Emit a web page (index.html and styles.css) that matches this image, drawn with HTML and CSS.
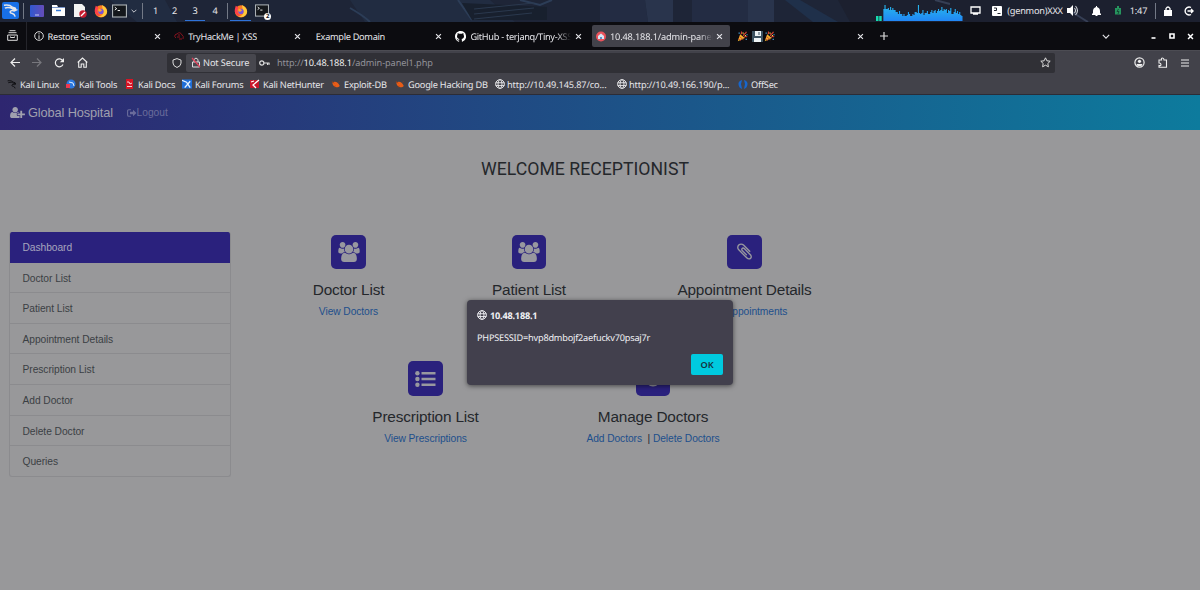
FILE: index.html
```html
<!DOCTYPE html>
<html lang="en">
<head>
  <meta charset="UTF-8" />
  <meta name="viewport" content="width=device-width, initial-scale=1.0"/>
  <title>Global Hospital - Receptionist</title>
  <link rel="stylesheet" href="styles.css">
</head>
<body>
  <svg class="sprite" width="0" height="0">
    <symbol id="dragon" viewBox="0 0 16 16"><path d="M1 3c4-1 7 0 9 2M2 6c4-2 7 0 9 1l3 1-2 1c-3-1-5 0-4 2 1 1 4 0 5 4M10 5l3 1 1 2" fill="none" stroke="currentColor" stroke-width="1.6"/></symbol>
    <symbol id="firefox" viewBox="0 0 16 16"><circle cx="8" cy="8.5" r="7" fill="#ff7a22"/><path d="M9 1c4 2 6 5 6 8-1 5-6 7-10 5 5 0 7-4 5-8z" fill="#ffcb3a"/><path d="M1 6l1-4 3 2C3 8 4 12 8 13c-4 2-8-3-7-7z" fill="#ff3d4d"/><circle cx="8" cy="8.5" r="3" fill="#7954d8"/><path d="M5 6c3-1 4 1 4 2-2 0-2 2-4 0z" fill="#ffa530"/></symbol>
    <symbol id="terminal" viewBox="0 0 16 14"><rect x=".6" y=".6" width="14.8" height="12.8" fill="#14171b" stroke="#aab0b4" stroke-width="1.2"/><path d="M3 3l2 1.5L3 6M6 6.5h2.5" fill="none" stroke="#fff"/></symbol>
    <symbol id="globe" viewBox="0 0 16 16"><g fill="none" stroke="currentColor" stroke-width="1.5"><circle cx="8" cy="8" r="7"/><ellipse cx="8" cy="8" rx="3.2" ry="7"/><path d="M1 6h14M1 10.5h14"/></g></symbol>
    <symbol id="close" viewBox="0 0 8 8"><path d="M1.2 1.2l5.6 5.6M6.8 1.2L1.2 6.8" stroke="currentColor" stroke-width="1.3"/></symbol>
    <symbol id="chevron" viewBox="0 0 10 6"><path d="M1 1l4 4 4-4" fill="none" stroke="currentColor" stroke-width="1.4"/></symbol>
    <symbol id="popper" viewBox="0 0 14 14"><path d="M1 13l3-9 6 5z" fill="#f5b52d"/><path d="M3 7l5 4M2 10l3 2" stroke="#d24a32" stroke-width="1.2"/><path d="M5 4c1-1 2-2 0-3M8 6c1-3 3-2 4-5M9 8c2-2 3 0 4-1" fill="none" stroke="#e9483b" stroke-width="1.3"/><path d="M2 2h1.5v1.5H2zM12 4h1.5v1.5H12zM11 10h1.5v1.5H11z" fill="#48a8e8"/><path d="M7 2h1.5v1.5H7zM10 5h1.5v1.5H10z" fill="#ffda45"/></symbol>
    <symbol id="exploit" viewBox="0 0 12 12"><path d="M1.500 4.500c3-3 8 0 9 4-2 2.500-6 1.500-8-1z" fill="#e85d18"/><path d="M1 3l3 2M5 8l-1 2M9 4l1-1" stroke="#a43e12"/></symbol>
    <symbol id="users" viewBox="0 0 1920 1792"><path fill="currentColor" d="M593 896q-162 5-265 128h-134q-82 0-138-40.5t-56-118.5q0-353 124-353 6 0 43.5 21t97.5 42.5 119 21.5q67 0 133-23-5 37-5 66 0 139 81 256zm1071 637q0 120-73 189.5t-194 69.5h-874q-121 0-194-69.5t-73-189.5q0-53 3.5-103.5t14-109 26.5-108.5 43-97.5 62-81 85.5-53.5 111.5-20q10 0 43 21.5t73 48 107 48 135 21.5 135-21.5 107-48 73-48 43-21.5q61 0 111.5 20t85.5 53.5 62 81 43 97.5 26.5 108.5 14 109 3.5 103.5zm-1024-1277q0 106-75 181t-181 75-181-75-75-181 75-181 181-75 181 75 75 181zm704 384q0 159-112.5 271.5t-271.5 112.5-271.5-112.5-112.5-271.5 112.5-271.5 271.5-112.5 271.5 112.5 112.5 271.5zm576 225q0 78-56 118.5t-138 40.5h-134q-103-123-265-128 81-117 81-256 0-29-5-66 66 23 133 23 59 0 119-21.5t97.5-42.5 43.5-21q124 0 124 353zm-128-609q0 106-75 181t-181 75-181-75-75-181 75-181 181-75 181 75 75 181z"/></symbol>
  </svg>

  <header class="panel">
    <svg class="wallpaper" viewBox="0 0 1200 22" preserveAspectRatio="none">
      <rect width="1200" height="22" fill="#1e2537"/>
      <path d="M110 0h55l12 22h-40zM350 0h140l25 22H365z" fill="#212c41"/>
      <path d="M350 8q14 8 20 14M458 0l14 20M520 0l20 5 12-5" stroke="#2c3d57" stroke-width="2" fill="none"/>
      <path d="M462 3l85 4v13h-75z" fill="#18202e"/>
      <path d="M474 9l60-6M474 14l60-6M474 19l58-6" stroke="#2b394e"/>
      <path d="M600 0h45l3 22h-48zM692 0h57v22h-57z" fill="#232c43"/>
      <path d="M645 0h28v22h-25zM748 0h26v22h-26z" fill="#29344c"/>
      <path d="M785 0h15l38 22h-25z" fill="#1f304a"/>
      <path d="M838 0h362v22H850z" fill="#1c202f"/>
      <path d="M935 0l15 4M1072 12l16 10" stroke="#363f55" stroke-width="2"/>
    </svg>
    <div class="panel-left">
      <span><svg class="kali" width="17" height="17" viewBox="0 0 17 17"><rect width="17" height="17" rx="2" fill="#1870e8"/><use href="#dragon" x="1" y="0" width="15" height="16"/></svg></span>
      <i class="sep"></i>
      <span><svg width="14" height="12" viewBox="0 0 14 12"><defs><linearGradient id="desk"><stop stop-color="#3058d0"/><stop offset="1" stop-color="#654dba"/></linearGradient></defs><rect width="14" height="12" rx="1" fill="url(#desk)"/><path d="M5 10h4" stroke="#c8cdf3"/></svg></span>
      <span><svg width="15" height="13" viewBox="0 0 15 13"><path d="M1 1h5l1 2h7v9H1z" fill="#fff"/><path d="M1 3.5h13" stroke="#7896cc"/><path d="M5 6.5h5" stroke="#3479d8" stroke-width="1.5"/></svg></span>
      <span><svg width="13" height="14" viewBox="0 0 13 14"><path d="M0 0h8l3 3v10H0z" fill="#f2f2f2"/><circle cx="9" cy="10" r="3.7" fill="#c71c30"/><path d="M7 12l4-4" stroke="#fff" stroke-width="1.2"/></svg></span>
      <span><svg width="14" height="14"><use href="#firefox"/></svg></span>
      <span><svg width="15" height="14"><use href="#terminal"/></svg></span>
      <span><svg width="6" height="4"><use href="#chevron"/></svg></span>
      <i class="sep"></i>
      <span>1</span><span>2</span><span class="current">3</span><span>4</span>
      <i class="sep"></i>
      <span class="current"><svg width="14" height="14"><use href="#firefox"/></svg></span>
      <span class="stacked"><svg width="14" height="13"><use href="#terminal"/></svg><b>2</b></span>
    </div>
    <div class="panel-right">
      <svg class="graph" width="90" height="22" viewBox="0 0 90 22">
        <defs><linearGradient id="wave" x1="0" y1="0" x2="0" y2="1"><stop stop-color="#27b9ec"/><stop offset="1" stop-color="#2186f5"/></linearGradient></defs>
        <path d="M3 16h2.500v5H3zM6.200 16H8.700v5H6.200z" fill="#16dcb0"/>
        <path transform="translate(-.8 0) scale(1.115 1)" fill="url(#wave)" d="M10 21V9h1V5h1v4h2V8h1v2h1V7h1v3h1V8h1v2h2v2h2v2h1v-3h1v3h2v2h1v-2h1v2h2v-1h1v-3h1v2h1v2h2v-2h1v1h1v-3h2v1h1V5h1v8h1v1h1v-1h1v-3h1v5h1v-2h2v-2h1v3h2v-2h1v-2h1v3h1v-2h1v-1h1v3h1v-2h1v-2h1v2h1v-1h1v-3h1v4h1v-2h1v1h1V9h1v4h1v-3h1v1h1V8h1v6h2v-2h1V9h1v4h1v-2h1v3h1v-2h1v3h1v1h1v5z"/>
      </svg>
      <span><svg width="11" height="9" viewBox="0 0 11 9"><path d="M1 1h9v6H1zM3 8h5" fill="none" stroke="#fff" stroke-width="1.3"/></svg></span>
      <span><svg width="10" height="10" viewBox="0 0 10 10"><rect width="10" height="10" rx="1" fill="#fff"/><path d="M2 2h2.500v2.500H2M5.500 7.500h3" stroke="#20242f" fill="none"/></svg></span>
      <span class="genmon">(genmon)XXX</span>
      <span><svg width="12" height="11" viewBox="0 0 12 11"><path d="M0 3h3l3-3v11L3 8H0z" fill="#fff"/><path d="M7.500 3q2 2.500 0 5M8.500 1q4 4.500 0 9" fill="none" stroke="#cfd2d8" stroke-width="1.100"/></svg></span>
      <span><svg width="9" height="10" viewBox="0 0 9 10"><path d="M4 0h1v1q3 1 3 4v2l1 1v1H0V8l1-1V5q0-3 3-4zM3.500 9h2v1h-2z" fill="#fff"/></svg></span>
      <span><svg width="8" height="9" viewBox="0 0 8 9"><path d="M1 2h6v6.500H1zM3 0h2v2H3z" fill="#26955e"/><path d="M4.500 3L3 5.500h2L4 8" fill="none" stroke="#12382d" stroke-width=".8"/></svg></span>
      <span>1:47</span>
      <i class="sep"></i>
      <span><svg width="8" height="10" viewBox="0 0 8 10"><path d="M0 4h8v6H0z" fill="#fff"/><path d="M2 4V2.500q2-3 4 0V4" fill="none" stroke="#fff" stroke-width="1.300"/></svg></span>
      <span><svg width="11" height="10" viewBox="0 0 11 10"><path d="M8 1.500A4 4 0 1 0 8 8.500M4.500 5H10M8 3l2 2-2 2" fill="none" stroke="#fff" stroke-width="1.400"/></svg></span>
    </div>
  </header>

  <div class="tabs">
    <div class="recent"><svg width="11" height="11" viewBox="0 0 11 11"><path d="M2.500 .7h6M1.500 2.700h8M.7 5h9.600v5.300H.7zM3.500 6.500v1h4v-1" fill="none" stroke="#ddd" stroke-width="1"/></svg></div>
    <div class="tab"><svg width="10" height="10" viewBox="0 0 10 10"><circle cx="5" cy="5" r="4.300" fill="none" stroke="#ddd"/><path d="M5 4.300V8M5 2.200v1.200" stroke="#ddd"/></svg><span>Restore Session</span><svg class="x" width="7" height="7"><use href="#close"/></svg></div>
    <div class="tab"><svg width="10" height="9" viewBox="0 0 10 9"><path d="M2 6Q0 5 1 3q1-1 2-1 3-3 5 1 2 1 1 4M3 5h3M5 7h3M4 3h2" fill="none" stroke="#86131f" stroke-width="1"/></svg><span>TryHackMe | XSS</span><svg class="x" width="7" height="7"><use href="#close"/></svg></div>
    <div class="tab plain"><span>Example Domain</span><svg class="x" width="7" height="7"><use href="#close"/></svg></div>
    <div class="tab"><svg width="11" height="11" viewBox="0 0 16 16"><path fill="#fff" d="M8 0C3.580 0 0 3.580 0 8c0 3.540 2.290 6.530 5.470 7.590.4.070.55-.17.55-.38v-1.490c-2.010.37-2.530-.49-2.690-.94-.09-.23-.48-.94-.82-1.130-.28-.15-.68-.52-.01-.53.63-.01 1.080.58 1.230.82.72 1.210 1.870.87 2.330.66.07-.52.28-.87.51-1.070-1.780-.2-3.640-.89-3.640-3.950 0-.87.31-1.590.82-2.150-.08-.2-.36-1.020.08-2.120 0 0 .67-.21 2.200.82a7.400 7.400 0 0 1 4 0c1.530-1.040 2.200-.82 2.200-.82.44 1.100.16 1.920.08 2.120.51.56.82 1.270.82 2.150 0 3.070-1.870 3.750-3.650 3.950.29.25.54.73.54 1.480v2.200c0 .21.15.46.55.38A8 8 0 0 0 8 0z"/></svg><span class="fade">GitHub - terjanq/Tiny-XSS</span><svg class="x" width="7" height="7"><use href="#close"/></svg></div>
    <div class="tab active"><svg width="11" height="11" viewBox="0 0 11 11"><circle cx="5" cy="5.500" r="5" fill="#e9525b"/><path d="M2 5l3-2.500L8 5v3H2z" fill="#d7e7f4"/><path d="M4 8V6h2v2z" fill="#5c92c4"/></svg><span class="fade">10.48.188.1/admin-panel</span><svg class="x" width="7" height="7"><use href="#close"/></svg></div>
    <div class="tab emoji"><svg width="11" height="11"><use href="#popper"/></svg><svg class="floppy" width="11" height="11" viewBox="0 0 11 11"><path d="M0 0h11v11H0z" fill="#3d5260"/><path d="M3 0h6v5H3zM2 7h7v4H2z" fill="#edf3f5"/><path d="M7 1v3" stroke="#3d5260"/></svg><svg width="11" height="11"><use href="#popper"/></svg><svg class="x" width="7" height="7"><use href="#close"/></svg></div>
    <svg class="plus" width="8" height="8" viewBox="0 0 8 8"><path d="M4 0v8M0 4h8" stroke="#ddd" stroke-width="1.200"/></svg>
    <div class="window-buttons">
      <svg width="8" height="5"><use href="#chevron"/></svg>
      <svg width="5" height="5" viewBox="0 0 5 5"><path d="M.5 4h4" stroke="#fff" stroke-width="1.600"/></svg>
      <svg width="6" height="6" viewBox="0 0 6 6"><path d="M1 1h4v4H1z" fill="none" stroke="#fff" stroke-width="1.600"/></svg>
      <svg width="7" height="7" viewBox="0 0 8 8"><path d="M1.200 1.200l5.600 5.600M6.800 1.200L1.200 6.800" stroke="#fff" stroke-width="1.700"/></svg>
    </div>
  </div>

  <div class="toolbar">
    <div class="nav-buttons">
      <svg width="10" height="9" viewBox="0 0 10 9"><path d="M10 4.500H1M5 .5l-4 4 4 4" fill="none" stroke="#eee" stroke-width="1.200"/></svg>
      <svg width="10" height="9" viewBox="0 0 10 9"><path d="M0 4.500h9M5 .5l4 4-4 4" fill="none" stroke="#77777d" stroke-width="1.200"/></svg>
      <svg width="11" height="10" viewBox="0 0 11 10"><path d="M8.800 2.700A4 4 0 1 0 9 6.500" fill="none" stroke="#eee" stroke-width="1.200"/><path d="M10 0v4.200H5.800z" fill="#eee"/></svg>
      <svg width="11" height="11" viewBox="0 0 11 11"><path d="M.7 5.500L5.500 1l4.800 4.500M1.700 5v5.300h2.500V7h2.600v3.300h2.500V5" fill="none" stroke="#eee" stroke-width="1.100"/></svg>
    </div>
    <div class="urlbar">
      <svg class="shield" width="10" height="10" viewBox="0 0 10 10"><path d="M5 .6l4 1.500v3Q9 8 5 9.500 1 8 1 5V2z" fill="none" stroke="#ddd"/></svg>
      <div class="insecure"><svg width="10" height="11" viewBox="0 0 10 11"><path d="M1.500 5h7v5h-7zM3 5V2.500q2-3 4 0V5" fill="none" stroke="#ddd"/><path d="M1 1l8 9" stroke="#e2425c" stroke-width="1.200"/></svg><span>Not Secure</span></div>
      <svg class="key" width="11" height="6" viewBox="0 0 11 6"><path d="M5 3h5.500M8.500 3v2M10 3v2" stroke="#ddd"/><circle cx="2.800" cy="3" r="2.100" fill="none" stroke="#ddd" stroke-width="1.200"/></svg>
      <span class="url">http://<b>10.48.188.1</b>/admin-panel1.php</span>
      <svg class="star" width="11" height="11" viewBox="0 0 11 11"><path d="M5.500.8l1.400 3 3.300.4-2.400 2.300.6 3.300-2.900-1.600-2.900 1.600.6-3.300L.8 4.200l3.300-.4z" fill="none" stroke="#ddd"/></svg>
    </div>
    <div class="tool-icons">
      <svg width="11" height="11" viewBox="0 0 11 11"><circle cx="5.500" cy="5.500" r="4.600" fill="none" stroke="#eee" stroke-width="1.200"/><circle cx="5.500" cy="4.300" r="1.600" fill="#eee"/><path d="M2.500 7h6L7.500 9h-4z" fill="#eee"/></svg>
      <svg width="10" height="11" viewBox="0 0 10 11"><path d="M1 3h2.500q-.5-2 1-2t1.500 2h2.500v7.300H1V8.500q2 .5 2-1T1 6z" fill="none" stroke="#eee" stroke-width="1.100"/></svg>
      <svg width="8" height="8" viewBox="0 0 8 8"><path d="M0 1h8M0 4h8M0 7h8" stroke="#eee" stroke-width="1.100"/></svg>
    </div>
  </div>

  <div class="bookmarks">
    <a><svg class="black" width="10" height="10"><use href="#dragon"/></svg>Kali Linux</a>
    <a><svg width="10" height="10" viewBox="0 0 10 10"><circle cx="5" cy="5" r="4.500" fill="#2b78df"/><path d="M0 5h4v4H0z" fill="#ef3950"/><path d="M3 3l4 1 1 3" stroke="#d9ebff" fill="none"/></svg>Kali Tools</a>
    <a><svg width="10" height="10" viewBox="0 0 10 10"><path d="M1 0h7v10H1z" fill="#d81424"/><path d="M2 3h2l1 2 2-1M2 7.500h5" stroke="#fff" stroke-width=".8" fill="none"/></svg>Kali Docs</a>
    <a><svg width="10" height="10" viewBox="0 0 11 10"><path d="M0 0h11v10H0z" fill="#1f6ed7"/><path d="M0 1l5 2 4 6M3 9l6-7" stroke="#e7f2ff" stroke-width="1.500" fill="none"/></svg>Kali Forums</a>
    <a><svg width="10" height="10" viewBox="0 0 10 10"><path d="M0 1h9v8H0z" fill="#c9152a"/><path d="M9 1L3 6l3 3M1 3l3-1" stroke="#fff" stroke-width="1.300" fill="none"/></svg>Kali NetHunter</a>
    <a><svg width="10" height="10"><use href="#exploit"/></svg>Exploit-DB</a>
    <a><svg width="10" height="10"><use href="#exploit"/></svg>Google Hacking DB</a>
    <a class="ip"><svg width="10" height="10"><use href="#globe"/></svg>http://10.49.145.87/co...</a>
    <a class="ip"><svg width="10" height="10"><use href="#globe"/></svg>http://10.49.166.190/p...</a>
    <a><svg width="10" height="9" viewBox="0 0 10 9"><path d="M4 0Q0 1 .5 4.500T4 9L3 4zM6 0q4 1 3.500 4.500T6 9l1-5z" fill="#1766cc"/></svg>OffSec</a>
  </div>

  <nav class="navbar">
    <a class="brand"><svg width="15" height="13" viewBox="0 0 2048 1792"><path fill="currentColor" d="M704 896q-159 0-271.500-112.500t-112.500-271.500 112.500-271.500 271.500-112.500 271.500 112.500 112.500 271.500-112.500 271.500-271.500 112.500zm960 128h352q13 0 22.500 9.500t9.500 22.500v192q0 13-9.500 22.500t-22.500 9.500h-352v352q0 13-9.500 22.500t-22.500 9.500h-192q-13 0-22.500-9.500t-9.500-22.500v-352h-352q-13 0-22.500-9.500t-9.500-22.500v-192q0-13 9.500-22.500t22.500-9.500h352v-352q0-13 9.500-22.500t22.500-9.500h192q13 0 22.500 9.500t9.500 22.500v352zm-736 224q0 52 38 90t90 38h256v238q-68 50-171 50h-874q-121 0-194-69t-73-190q0-53 3.500-103.500t14-109 26.500-108.500 43-97.500 62-81 85.500-53.500 111.500-20q19 0 39 17 79 61 154.500 91.500t164.500 30.500 164.500-30.500 154.500-91.500q20-17 39-17 132 0 217 96h-223q-52 0-90 38t-38 90v192z"/></svg>Global Hospital</a>
    <a class="logout"><svg width="10" height="8" viewBox="0 0 10 8"><path d="M4 .7H1.800Q.6.700.6 2v4q0 1.300 1.200 1.300H4" fill="none" stroke="currentColor" stroke-width="1.100"/><path d="M3 2.700h3V.8L9.500 4 6 7.200V5.300H3z" fill="currentColor"/></svg>Logout</a>
  </nav>

  <main>
    <h3 class="welcome">WELCOME RECEPTIONIST</h3>
    <div class="layout">
      <aside class="list-group">
        <a class="active">Dashboard</a>
        <a>Doctor List</a>
        <a>Patient List</a>
        <a>Appointment Details</a>
        <a>Prescription List</a>
        <a>Add Doctor</a>
        <a>Delete Doctor</a>
        <a>Queries</a>
      </aside>
      <section class="dashboard">
        <div class="cards cards-top">
          <div class="card">
            <div class="square"><svg width="22" height="20"><use href="#users"/></svg></div>
            <h4>Doctor List</h4>
            <p><a>View Doctors</a></p>
          </div>
          <div class="card">
            <div class="square"><svg width="22" height="20"><use href="#users"/></svg></div>
            <h4>Patient List</h4>
            <p><a>View Patients</a></p>
          </div>
          <div class="card">
            <div class="square"><svg width="19" height="19" viewBox="0 0 1792 1792"><path fill="currentColor" d="M1596 1385q0 117-79 196t-196 79q-135 0-235-100l-777-776q-113-115-113-271 0-159 110-270t269-111q158 0 273 113l605 606q10 10 10 22 0 16-30.500 46.500t-46.500 30.500q-13 0-23-10l-606-607q-79-77-181-77-106 0-179 75t-73 181q0 105 76 181l776 777q63 63 145 63 64 0 106-42t42-106q0-82-63-145l-581-581q-26-24-60-24-29 0-48 19t-19 48q0 32 25 59l410 410q10 10 10 22 0 16-31 47t-47 31q-12 0-22-10l-410-410q-63-61-63-149 0-82 57-139t139-57q88 0 149 63l581 581q100 98 100 235z"/></svg></div>
            <h4>Appointment Details</h4>
            <p><a>View Appointments</a></p>
          </div>
        </div>
        <div class="cards cards-bottom">
          <div class="card">
            <div class="square"><svg width="21" height="16" viewBox="0 0 21 16"><g fill="currentColor"><circle cx="2.400" cy="2.200" r="2.200"/><circle cx="2.400" cy="8" r="2.200"/><circle cx="2.400" cy="13.800" r="2.200"/><path d="M6.500 1h14v2.600h-14zM6.500 6.700h14v2.600h-14zM6.500 12.500h14v2.600h-14z"/></g></svg></div>
            <h4>Prescription List</h4>
            <p><a>View Prescriptions</a></p>
          </div>
          <div class="card">
            <div class="square"><svg width="16" height="16" viewBox="0 0 16 16"><circle cx="8" cy="8" r="6.500" fill="none" stroke="currentColor" stroke-width="2"/><path d="M8 4v8M4 8h8" stroke="currentColor" stroke-width="2"/></svg></div>
            <h4>Manage Doctors</h4>
            <p><a>Add Doctors</a>&nbsp; |&nbsp;<a>Delete Doctors</a></p>
          </div>
        </div>
      </section>
    </div>
  </main>

  <div class="dialog">
    <div class="origin"><svg width="10" height="10"><use href="#globe"/></svg><b>10.48.188.1</b></div>
    <p>PHPSESSID=hvp8dmbojf2aefuckv70psaj7r</p>
    <button>OK</button>
  </div>
</body>
</html>
```
FILE: styles.css
```css
* {
  box-sizing: border-box;
}

body {
  margin: 0;
  width: 1200px;
  height: 590px;
  overflow: hidden;
  position: relative;
  display: flex;
  flex-direction: column;
  background: #98989a;
  color: #e6e6ea;
  font-family: "Noto Sans", sans-serif;
  font-size: 9.2px;
  letter-spacing: -0.22px;
  text-rendering: geometricPrecision;
  white-space: nowrap;
}

svg {
  display: block;
  flex: none;
}

.sprite {
  position: absolute;
}

/* desktop panel */
.panel {
  height: 22px;
  display: flex;
  justify-content: space-between;
  position: relative;
  flex: none;
}

.wallpaper {
  position: absolute;
  inset: 0;
  width: 1200px;
  height: 22px;
}

.panel-left, .panel-right {
  display: grid;
  position: relative;
}

.panel-left {
  grid-template-columns: 21px 5px 22px 20px 24px 17px 21px 8px 9px 17px 21px 20px 20px 5px 21px 22px;
}

.panel-right {
  grid-template-columns: 90px 24px 20px 56px 20px 26px 17px 25px 9px 16px 24px;
}

.panel span {
  display: flex;
  align-items: center;
  justify-content: center;
  height: 21px;
  position: relative;
}

.panel .current {
  border-bottom: 1px solid #2f73d8;
  padding-top: 1px;
}

.panel .sep {
  width: 1px;
  height: 16px;
  margin: 3px auto;
  background: #737986;
}

.stacked b {
  position: absolute;
  right: 2px;
  bottom: 1px;
  width: 7px;
  height: 7px;
  border-radius: 50%;
  background: #fff;
  color: #111;
  font-size: 6px;
  line-height: 7px;
  text-align: center;
}

/* browser tabs */
.tabs {
  height: 28px;
  background: #0c0c10;
  display: flex;
  align-items: center;
  letter-spacing: -0.3px;
  flex: none;
}

.recent {
  width: 27px;
  height: 28px;
  margin-right: 2.6px;
  padding: 8px 0 0 7px;
  border-right: 1px solid #25252b;
}

.tab {
  width: 138px;
  height: 22px;
  margin-right: 2.6px;
  padding: 0 7px 0 4px;
  border-radius: 2px;
  display: flex;
  align-items: center;
  gap: 4px;
}

.tab span {
  overflow: hidden;
}

.tab .x {
  margin-left: auto;
}

.tab.plain {
  padding-left: 5px;
}

.tab.active {
  background: #42424a;
  gap: 3px;
}

.tab.emoji {
  gap: 0;
}

.floppy {
  margin: 0 1px 0 4px;
}

.fade {
  width: 105px;
  -webkit-mask-image: linear-gradient(to right, #000 86%, transparent);
  mask-image: linear-gradient(to right, #000 86%, transparent);
}

.active .fade {
  letter-spacing: -0.15px;
}

.plus {
  margin-left: 7px;
}

.window-buttons {
  margin: 0 4px 0 auto;
  display: grid;
  grid-template-columns: 80px 14px 24px 12px;
  justify-items: center;
  align-items: center;
}

/* address bar */
.toolbar {
  height: 24px;
  background: #42424a;
  display: flex;
  align-items: center;
  border-top: 1px solid #4c4c53;
  flex: none;
}

.nav-buttons {
  width: 167px;
  padding-left: 10px;
  display: flex;
  align-items: center;
  gap: 12px;
}

.urlbar {
  width: 888px;
  height: 20px;
  background: #303036;
  border-radius: 2px;
  display: flex;
  align-items: center;
  letter-spacing: -0.1px;
}

.shield {
  margin: 0 4px 0 5px;
}

.insecure {
  width: 70px;
  height: 18px;
  padding-left: 5px;
  background: #47474e;
  border-radius: 2px;
  display: flex;
  align-items: center;
  gap: 2px;
}

.key {
  margin: 0 7px 0 3px;
}

.url {
  color: #929299;
}

.url b {
  font-weight: 400;
  color: #eee;
}

.star {
  margin: 0 4px 0 auto;
}

.tool-icons {
  margin: 0 11px 0 auto;
  display: flex;
  align-items: center;
  gap: 13px;
}

/* bookmarks */
.bookmarks {
  height: 21px;
  padding-left: 7px;
  background: #42424a;
  border-bottom: 1px solid #2c2c36;
  display: grid;
  grid-template-columns: 59px 59px 57px 68px 81px 64px 100px 122px 121px 60px;
  flex: none;
}

.bookmarks a {
  display: flex;
  align-items: center;
  gap: 3px;
}

.bookmarks .ip {
  gap: 2px;
  letter-spacing: -0.13px;
}

.black {
  color: #101014;
}

/* page */
.navbar {
  height: 35px;
  padding-left: 10px;
  display: flex;
  align-items: center;
  background: linear-gradient(to right, #2e2670, #0d7b9d);
  font-family: "Liberation Sans", sans-serif;
  letter-spacing: 0;
  text-rendering: auto;
  flex: none;
}

.brand {
  width: 116.5px;
  display: flex;
  align-items: center;
  gap: 3px;
  font-size: 12.8px;
  letter-spacing: -0.12px;
  color: #a0a0ae;
}

.logout {
  display: flex;
  align-items: center;
  font-size: 10.24px;
  color: #6a6c9b;
}

main {
  font-family: "Liberation Sans", sans-serif;
  font-size: 10.24px;
  letter-spacing: 0;
  text-rendering: auto;
  color: #24272b;
}

.welcome {
  width: 1170px;
  margin: 26px 0 0;
  height: 76px;
  line-height: 26px;
  text-align: center;
  font-family: Roboto, sans-serif;
  font-size: 17.7px;
  font-weight: 400;
}

.layout {
  display: flex;
}

.list-group {
  width: 222px;
  margin-left: 9px;
  border: 1px solid #8b8b8e;
  border-top: 0;
  border-radius: 3px;
  height: 245px;
  overflow: hidden;
}

.list-group a {
  display: block;
  height: 30.6px;
  padding-left: 12.5px;
  line-height: 32px;
  letter-spacing: -0.05px;
  border-bottom: 1px solid #8b8b8e;
  color: #3b3f44;
}

.list-group .active {
  background: #2a217d;
  border-color: #2a217d;
  color: #a7a5bd;
}

.dashboard {
  padding-top: 2.5px;
}

.cards {
  display: flex;
  height: 126.8px;
}

.card {
  text-align: center;
}

.cards-top {
  padding-left: 27px;
}

.cards-top .card:nth-child(1) {
  width: 181px;
}

.cards-top .card:nth-child(2) {
  width: 180px;
}

.cards-top .card:nth-child(3) {
  width: 251px;
}

.cards-bottom {
  padding-left: 94.5px;
}

.cards-bottom .card {
  width: 200px;
}

.cards-bottom .card + .card {
  width: 255px;
}

.square {
  width: 34.5px;
  height: 34.5px;
  margin: 0 auto;
  border-radius: 5px;
  background: #2a217d;
  color: #98989f;
  display: flex;
  align-items: center;
  justify-content: center;
}

.card h4 {
  margin: 12px 0 5px;
  font-size: 15.36px;
  line-height: 18px;
  font-weight: 400;
  letter-spacing: -0.17px;
}

.card p {
  margin: 0;
  line-height: 15px;
  letter-spacing: -0.07px;
}

.card p a {
  color: #1d4f8c;
}

/* alert */
.dialog {
  position: absolute;
  left: 467px;
  top: 300px;
  width: 266px;
  height: 85px;
  padding: 8px 10px;
  border-radius: 4px;
  background: #42404d;
  box-shadow: 0 1px 5px rgba(0, 0, 0, 0.55);
  color: #f0f0f4;
  display: flex;
  flex-direction: column;
}

.origin {
  display: flex;
  align-items: center;
  gap: 3px;
  height: 14px;
}

.dialog p {
  margin: 9px 0 8px;
  line-height: 14px;
}

.dialog button {
  width: 32px;
  height: 21px;
  margin: 1px 0 0 auto;
  padding: 0;
  flex: none;
  border: 0;
  border-radius: 2px;
  background: #00cadf;
  color: #15303c;
  font: 600 9.2px "Noto Sans", sans-serif;
}
```
